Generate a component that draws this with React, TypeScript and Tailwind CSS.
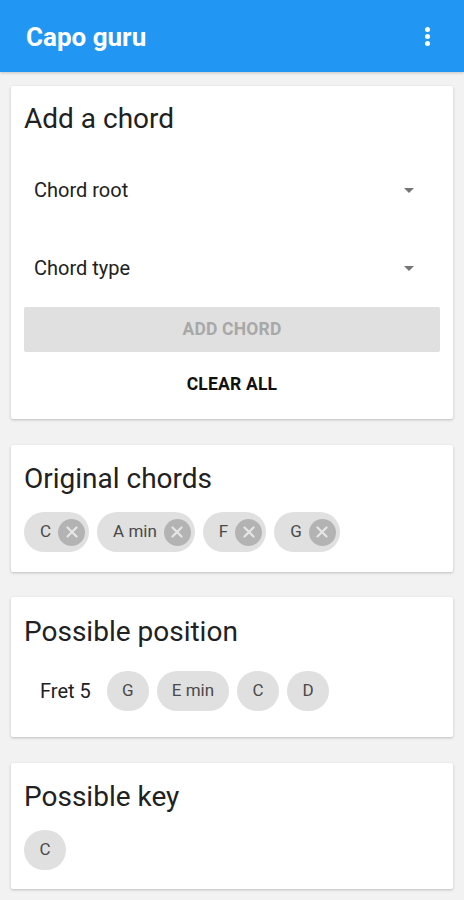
import { ReactNode } from 'react';

function Card({ title, children, className }: { title: string; children: ReactNode; className?: string }) {
  return (
    <div className={'mx-[11px] rounded-[2px] bg-white px-[13px] shadow-[0_1px_3px_rgba(0,0,0,0.22)] ' + (className ?? '')}>
      <h2 className="h-[32px] text-[28px] leading-[32px] text-[#212121]">{title}</h2>
      {children}
    </div>
  );
}

function RemovableChip({ label }: { label: string }) {
  return (
    <div className="flex h-[40px] items-center rounded-full bg-[#e0e0e0] pl-[16px] pr-[4px]">
      <span className="text-[17px] text-[#4a4a4a]">{label}</span>
      <span className="ml-[7px] flex h-[27px] w-[27px] items-center justify-center rounded-full bg-[#b3b3b3]">
        <svg width="12" height="12" viewBox="0 0 12 12">
          <path d="M1.5 1.5 L10.5 10.5 M10.5 1.5 L1.5 10.5" stroke="#e6e6e6" strokeWidth="2.2" strokeLinecap="round" />
        </svg>
      </span>
    </div>
  );
}

function Chip({ label }: { label: string }) {
  return (
    <div className="flex h-[40px] min-w-[42px] items-center justify-center rounded-full bg-[#e0e0e0] px-[15px] text-[17px] text-[#4a4a4a]">
      {label}
    </div>
  );
}

function Select({ label }: { label: string }) {
  return (
    <div className="flex h-[56px] items-center justify-between pl-[10px] pr-[26px]">
      <span className="text-[20px] text-[#212121]">{label}</span>
      <svg width="10" height="5" viewBox="0 0 10 5">
        <path d="M0 0 L10 0 L5 5 Z" fill="#757575" />
      </svg>
    </div>
  );
}

export default function App() {
  return (
    <div className="min-h-[900px] bg-[#f2f2f2] pb-[10px]" style={{ fontFamily: 'Roboto, "Noto Sans", sans-serif' }}>
      <header className="flex h-[72px] items-center justify-between bg-[#2196f3] pl-[26px] pr-[34px] shadow-[0_1px_3px_rgba(0,0,0,0.2)]">
        <h1 className="pt-[2px] text-[26px] font-bold text-white">Capo guru</h1>
        <div className="flex flex-col items-center gap-[2px]">
          <span className="h-[5px] w-[5px] rounded-full bg-white" />
          <span className="h-[5px] w-[5px] rounded-full bg-white" />
          <span className="h-[5px] w-[5px] rounded-full bg-white" />
        </div>
      </header>

      <div className="flex flex-col pt-[14px]">
        <Card title="Add a chord" className="pt-[17px] pb-[13px]">
          <div className="mt-[27px]">
            <Select label="Chord root" />
          </div>
          <div className="mt-[22px]">
            <Select label="Chord type" />
          </div>
          <button className="mt-[11px] flex h-[45px] w-full items-center justify-center rounded-[2px] bg-[#e0e0e0] text-[17.5px] font-bold tracking-[0.2px] text-[#a8a8a8]">
            ADD CHORD
          </button>
          <button className="mt-[10px] flex h-[44px] w-full items-center justify-center text-[17.5px] font-bold tracking-[0.2px] text-[#111]">
            CLEAR ALL
          </button>
        </Card>

        <Card title="Original chords" className="mt-[26px] pt-[18px] pb-[20px]">
          <div className="mt-[17px] flex gap-[8px]">
            <RemovableChip label="C" />
            <RemovableChip label="A min" />
            <RemovableChip label="F" />
            <RemovableChip label="G" />
          </div>
        </Card>

        <Card title="Possible position" className="mt-[25px] pt-[19px] pb-[26px]">
          <div className="mt-[23px] flex items-center gap-[8px]">
            <span className="mr-[8px] pl-[16px] text-[20px] text-[#212121]">Fret 5</span>
            <Chip label="G" />
            <Chip label="E min" />
            <Chip label="C" />
            <Chip label="D" />
          </div>
        </Card>

        <Card title="Possible key" className="mt-[26px] pt-[18px] pb-[19px]">
          <div className="mt-[17px] flex gap-[8px]">
            <Chip label="C" />
          </div>
        </Card>
      </div>
    </div>
  );
}
